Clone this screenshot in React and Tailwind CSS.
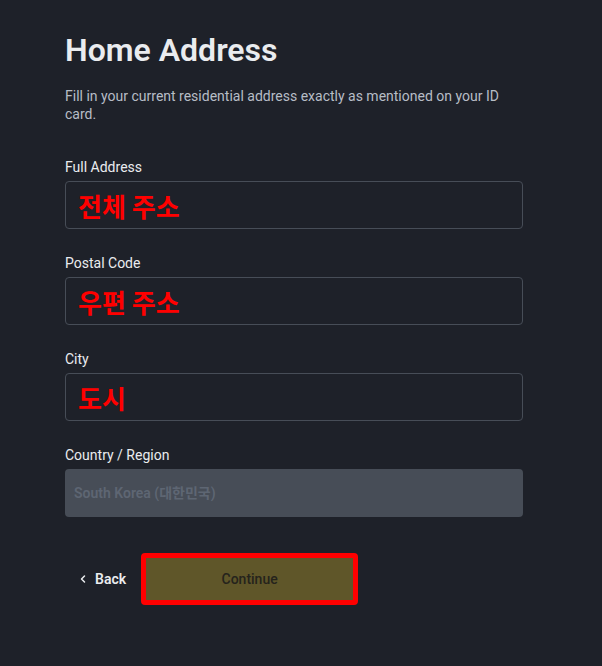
import { FiChevronLeft } from 'react-icons/fi';

const font = { fontFamily: 'Roboto, "Noto Sans CJK KR", sans-serif' };

const Field = ({ label, value }) => (
  <div className="flex flex-col">
    <label className="text-sm text-[#eaecef] leading-5 mb-1">{label}</label>
    <div className="h-12 rounded border border-[#474d57] flex items-center px-3">
      <span className="text-[26px] font-bold text-[#ff0000] font-['Noto_Sans_CJK_KR',sans-serif]">{value}</span>
    </div>
  </div>
);

const App = () => {
  return (
    <div className="min-h-[666px] bg-[#1e2129]" style={font}>
      <div className="ml-[65px] w-[458px] pt-[32px]">
        <h1 className="text-[32px] leading-9 font-semibold text-[#eaecef]">Home Address</h1>
        <p className="mt-[19px] text-sm leading-[18px] text-[#b7bdc6]">
          Fill in your current residential address exactly as mentioned on your ID card.
        </p>

        <div className="mt-[34px] flex flex-col gap-6">
          <Field label="Full Address" value="전체 주소" />
          <Field label="Postal Code" value="우편 주소" />
          <Field label="City" value="도시" />
          <div className="flex flex-col">
            <label className="text-sm text-[#eaecef] leading-5 mb-1">Country / Region</label>
            <div className="h-12 rounded bg-[#474d57] flex items-center px-[9px]">
              <span className="text-sm font-semibold text-[#5e6673]">South Korea (대한민국)</span>
            </div>
          </div>
        </div>

        <div className="mt-[36px] flex items-center">
          <button className="flex items-center gap-[6px] pl-[12px] pr-[15px] text-sm font-semibold text-[#eaecef]">
            <FiChevronLeft className="w-3 h-3" strokeWidth={3} />
            Back
          </button>
          <button className="w-[217px] h-[52px] border-[5px] border-[#ff0000] rounded-sm bg-[#5f5629] text-sm font-medium text-[#25231c]">
            Continue
          </button>
        </div>
      </div>
    </div>
  );
};

export default App;
